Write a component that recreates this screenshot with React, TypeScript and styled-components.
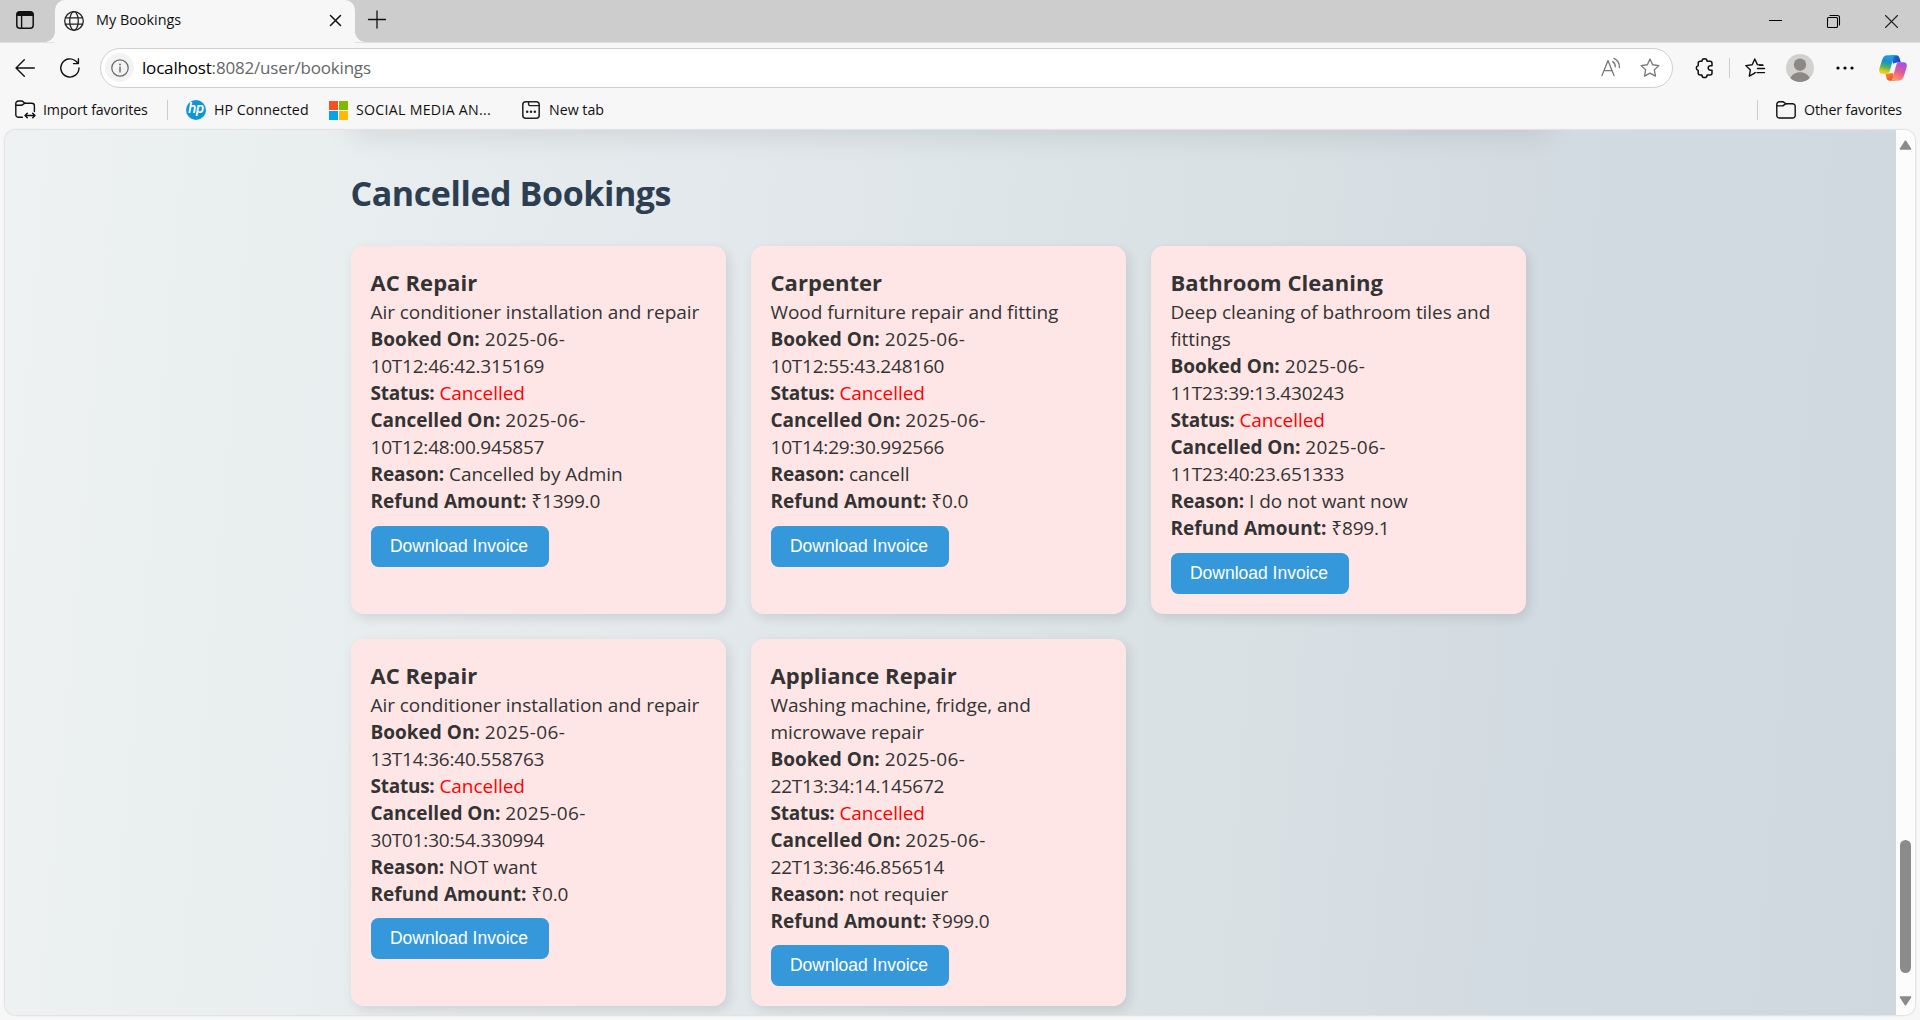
import React from "react";
import styled, { createGlobalStyle } from "styled-components";

const GlobalStyle = createGlobalStyle`
  * { box-sizing: border-box; }
  body {
    margin: 0;
    overflow: hidden;
    background: #f7f7f7;
    font-family: "Open Sans", "Noto Sans", sans-serif;
  }
  svg { display: block; flex: none; overflow: visible; }
`;

const Window = styled.div`
  width: 1920px;
  height: 1020px;
  display: flex;
  flex-direction: column;
  overflow: hidden;
  background: #f7f7f7;
`;

/* ---------- browser chrome ---------- */

const TabStrip = styled.div`
  height: 43px;
  flex: none;
  display: flex;
  background: #cdcdcd;
  border-bottom: 1px solid #e2e2e2;
`;

const TabActions = styled.div`
  width: 55px;
  padding: 11px 0 0 16px;
`;

const Tab = styled.div`
  position: relative;
  width: 300px;
  height: 43px;
  padding: 0 14px 2px 9px;
  display: flex;
  align-items: center;
  background: #f7f7f7;
  border-radius: 10px 10px 0 0;

  &::before,
  &::after {
    content: "";
    position: absolute;
    bottom: 1px;
    width: 10px;
    height: 10px;
  }
  &::before {
    left: -10px;
    background: radial-gradient(circle at 0 0, transparent 9.5px, #f7f7f7 10px);
  }
  &::after {
    right: -10px;
    background: radial-gradient(circle at 100% 0, transparent 9.5px, #f7f7f7 10px);
  }
`;

const TabTitle = styled.span`
  flex: 1;
  margin-left: 12px;
  padding-bottom: 1px;
  font-size: 14.4px;
  line-height: 20px;
  color: #111;
`;

const NewTab = styled.div`
  padding: 10px 0 0 13px;
`;

const WindowButtons = styled.div`
  margin-left: auto;
  padding: 15px 22px 0 0;
  display: flex;
  gap: 45px;
`;

const Toolbar = styled.div`
  height: 49px;
  flex: none;
  padding: 0 13px 0 15px;
  display: flex;
  align-items: center;
`;

const AddressBar = styled.div`
  width: 1573px;
  height: 40px;
  margin-left: 20px;
  padding: 0 12px 0 4px;
  display: flex;
  align-items: center;
  background: #fff;
  border: 1px solid #cfcfcf;
  border-radius: 20px;
`;

const InfoBadge = styled.div`
  width: 29px;
  height: 29px;
  display: grid;
  place-items: center;
  border-radius: 50%;
  background: #f3f3f3;
`;

const Url = styled.span`
  flex: 1;
  margin-left: 8px;
  font-size: 17px;
  letter-spacing: -0.18px;
  line-height: 24px;
  color: #666;
`;

const Host = styled.span`
  color: #000;
`;

const Divider = styled.span<{ $left: number; $right: number }>`
  width: 1px;
  height: 20px;
  margin-left: ${(p) => p.$left}px;
  margin-right: ${(p) => p.$right}px;
  background: #cdcdcd;
`;

const Slot = styled.span<{ $left: number }>`
  flex: none;
  margin-left: ${(p) => p.$left}px;
`;

const FavoritesBar = styled.div`
  height: 38px;
  flex: none;
  padding: 0 18px 2px 15px;
  display: flex;
  align-items: center;
`;

const Favorite = styled.div<{ $width?: number; $gap?: number }>`
  width: ${(p) => (p.$width ? `${p.$width}px` : "auto")};
  display: flex;
  align-items: center;
  gap: ${(p) => p.$gap ?? 8}px;
  white-space: nowrap;
`;

const FavoriteLabel = styled.span<{ $track?: number }>`
  font-size: 14.2px;
  letter-spacing: ${(p) => p.$track ?? 0}px;
  line-height: 20px;
  color: #111;
`;

const Spacer = styled.span`
  flex: 1;
`;

/* ---------- page ---------- */

const Viewport = styled.div`
  height: 885px;
  margin: 0 5px 5px;
  flex: none;
  display: flex;
  border-radius: 10px;
  overflow: hidden;
  box-shadow: 0 0 2px rgba(0, 0, 0, 0.3);
`;

const Page = styled.main`
  flex: 1;
  padding-left: 345.5px;
  display: flex;
  flex-direction: column;
  overflow: hidden;
  background: linear-gradient(95deg, #eef2f2 0%, #e3e9ec 36%, #d9e1e4 63%, #d3dbe2 80%, #cfd8df 100%);
`;

const PreviousSection = styled.div`
  flex: none;
  width: 1200px;
  height: 100px;
  margin-top: -105px;
  border-radius: 12px;
  box-shadow: 0 10px 30px rgba(0, 0, 0, 0.1);
`;

const Heading = styled.h2`
  margin: 45px 0 30px;
  font-size: 34px;
  font-weight: 700;
  letter-spacing: -0.42px;
  line-height: 46px;
  color: #2c3e50;
`;

const Grid = styled.div`
  display: grid;
  grid-template-columns: repeat(3, 375px);
  gap: 25px;
`;

const Card = styled.article`
  padding: 20px;
  border-radius: 12.5px;
  background: #ffe6e6;
  box-shadow: 3px 4px 12px rgba(0, 0, 0, 0.11);
  color: #333;
`;

const CardTitle = styled.h3`
  margin: 0 0 1px;
  font-size: 22px;
  font-weight: 700;
  letter-spacing: 0.04px;
  line-height: 32px;
`;

const Text = styled.p`
  margin: 0;
  font-size: 19px;
  letter-spacing: -0.05px;
  line-height: 27px;
`;

const Label = styled.strong<{ $track?: number }>`
  font-weight: 700;
  letter-spacing: ${(p) => p.$track ?? 0}px;
`;

const Status = styled.span`
  color: #f00;
`;

const Day = styled.span`
  letter-spacing: 0.38px;
`;

const Time = styled.span`
  letter-spacing: -0.21px;
`;

const InvoiceButton = styled.button`
  display: block;
  width: 178px;
  height: 41px;
  margin-top: 10.5px;
  padding: 0 1px 1px 0;
  border: 0;
  border-radius: 7.5px;
  background: #3498db;
  color: #fff;
  font: 17.5px/20px "Liberation Sans", Arial, sans-serif;
  white-space: nowrap;
`;

const ScrollTrack = styled.div`
  width: 19px;
  padding: 10px 0 9px;
  display: flex;
  flex-direction: column;
  align-items: center;
  background: #fcfcfc;
`;

const ScrollThumb = styled.div`
  width: 11px;
  height: 133px;
  margin: auto 0 23px;
  border-radius: 6px;
  background: #8b8b8b;
`;

/* ---------- icons ---------- */

const line = (color = "#111", width = 1.4) => ({
  fill: "none",
  stroke: color,
  strokeWidth: width,
  strokeLinecap: "round" as const,
  strokeLinejoin: "round" as const,
});

const TabActionsIcon = () => (
  <svg width="18" height="18" viewBox="0 0 18 18">
    <rect x="0.8" y="0.8" width="16.4" height="16.4" rx="3" {...line("#111", 1.5)} />
    <path d="M0.8 5V3.8a3 3 0 0 1 3-3h10.4a3 3 0 0 1 3 3V5z" fill="#111" />
    <path d="M5.6 5v12" {...line("#111", 1.4)} />
  </svg>
);

const GlobeIcon = () => (
  <svg width="20" height="20" viewBox="0 0 20 20" {...line("#222", 1.3)}>
    <circle cx="10" cy="10" r="9.3" />
    <ellipse cx="10" cy="10" rx="4.3" ry="9.3" />
    <path d="M1.5 6.8h17M1.5 13.2h17" />
  </svg>
);

const CloseIcon = ({ size, width, color }: { size: number; width: number; color: string }) => (
  <svg width={size} height={size} viewBox={`0 0 ${size} ${size}`}>
    <path d={`M0.5 0.5L${size - 0.5} ${size - 0.5}M${size - 0.5} 0.5L0.5 ${size - 0.5}`} {...line(color, width)} />
  </svg>
);

const PlusIcon = () => (
  <svg width="18" height="18" viewBox="0 0 18 18">
    <path d="M9 1v17M0.5 9.5h17" {...line("#111", 1.3)} />
  </svg>
);

const MinimizeIcon = () => (
  <svg width="13" height="13" viewBox="0 0 13 13">
    <path d="M0 5.5h13" stroke="#000" />
  </svg>
);

const RestoreIcon = () => (
  <svg width="13" height="13" viewBox="0 0 13 13">
    <rect x="0.5" y="2.5" width="10" height="10" rx="1" {...line("#000", 1.1)} />
    <path d="M3 0.5h7.5a2 2 0 0 1 2 2V10" {...line("#000", 1.1)} />
  </svg>
);

const BackIcon = () => (
  <svg width="20" height="20" viewBox="0 0 20 20">
    <path d="M19.3 10H1M9.3 1.8L1 10l8.3 8.2" {...line("#111", 1.4)} />
  </svg>
);

const ReloadIcon = () => (
  <svg width="20" height="20" viewBox="0 0 20 20">
    <path d="M19 10a9.1 9.1 0 1 1-3-6.8l2.2 2.2M18.4 0.8v4.8h-4.9" {...line("#111", 1.4)} />
  </svg>
);

const InfoIcon = () => (
  <svg width="18" height="18" viewBox="0 0 18 18">
    <circle cx="9" cy="9" r="8.2" {...line("#666", 1.2)} />
    <path d="M9 8v5" {...line("#666", 1.4)} />
    <circle cx="9" cy="5.4" r="0.95" fill="#666" />
  </svg>
);

const ReadAloudIcon = () => (
  <svg width="20" height="20" viewBox="0 0 20 20" {...line("#777", 1.3)}>
    <path d="M1 17.6L7 2.5l6 15.1M3.2 12.6h7.7" />
    <path d="M11.7 3.6a6 6 0 0 1 2.6 5.2M13 0.4a9.8 9.8 0 0 1 5.4 9.2" />
  </svg>
);

const StarIcon = () => (
  <svg width="20" height="20" viewBox="0 0 20 20">
    <path
      d="M10 1l2.65 5.75 6.25.8-4.6 4.35 1.2 6.25L10 15.1l-5.5 3.05 1.2-6.25L1.1 7.55l6.25-.8z"
      {...line("#777", 1.3)}
    />
  </svg>
);

const PuzzleIcon = () => (
  <svg width="19" height="20" viewBox="0 0 19 20">
    <path
      d="M7.9 3.3a2.6 2.6 0 0 1 5.2 0H16a2 2 0 0 1 2 2v2.5h-1.600a2.200 2.200 0 0 0 0 4.400H18v2.800a2 2 0 0 1-2 2h-2.900a2.600 2.600 0 0 1-5.200 0H6.200a2 2 0 0 1-2-2v-2.600a2.400 2.400 0 0 1 0-4.700V5.300a2 2 0 0 1 2-2z"
      {...line("#111", 1.5)}
    />
  </svg>
);

const FavoritesIcon = () => (
  <svg width="20" height="20" viewBox="0 0 20 20" {...line("#111", 1.4)}>
    <path d="M17.8 7.3l-5.4-.7L9.8 1 7.2 6.7l-6.4.9 4.6 4.3-1.1 6.3 5-2.8" />
    <path d="M12.5 10.5h7M12 14.6h7.5M14.5 7.3h3.3M9.6 14.9l.7-.3" />
  </svg>
);

const Avatar = () => (
  <svg width="28" height="28" viewBox="0 0 28 28">
    <clipPath id="avatar-clip">
      <circle cx="14" cy="14" r="14" />
    </clipPath>
    <circle cx="14" cy="14" r="14" fill="#d3d1ce" />
    <g clipPath="url(#avatar-clip)" fill="#8c8886">
      <circle cx="14" cy="10.7" r="6.2" />
      <path d="M3.8 25.5c1.6-5 5.6-7.3 10.2-7.3s8.6 2.3 10.2 7.3L14 29z" />
    </g>
  </svg>
);

const MoreIcon = () => (
  <svg width="18" height="4" viewBox="0 0 18 4" fill="#000">
    <circle cx="2" cy="2" r="1.6" />
    <circle cx="9" cy="2" r="1.6" />
    <circle cx="16" cy="2" r="1.6" />
  </svg>
);

const CopilotIcon = () => (
  <svg width="28" height="26" viewBox="0 0 28 26">
    <defs>
      <linearGradient id="cp-left" x1="0.5" y1="0" x2="0.3" y2="1">
        <stop offset="0" stopColor="#1f9bea" />
        <stop offset="0.35" stopColor="#1a8fd0" />
        <stop offset="0.62" stopColor="#4db35a" />
        <stop offset="0.9" stopColor="#f2cb14" />
      </linearGradient>
      <linearGradient id="cp-right" x1="0.7" y1="0" x2="0.3" y2="1">
        <stop offset="0" stopColor="#9a52ee" />
        <stop offset="0.45" stopColor="#e0559f" />
        <stop offset="1" stopColor="#fb9a62" />
      </linearGradient>
      <linearGradient id="cp-top" x1="0" y1="0" x2="1" y2="0.4">
        <stop offset="0" stopColor="#1785dd" />
        <stop offset="1" stopColor="#1a3fc4" />
      </linearGradient>
      <linearGradient id="cp-bottom" x1="0" y1="0" x2="0.6" y2="1">
        <stop offset="0" stopColor="#f6a21c" />
        <stop offset="1" stopColor="#ef4d3a" />
      </linearGradient>
    </defs>
    <path d="M12 .2h5.3c1.9 0 2.7 1.2 3.200 2.800L21.800 7.600h-3.500c-2 0-3.200 1-3.800 2.800z" fill="url(#cp-top)" />
    <path d="M16 25.800h-5.300c-1.900 0-2.700-1.200-3.200-2.800L6.400 18.500h3.300c2 0 3.200-1 3.800-2.800z" fill="url(#cp-bottom)" />
    <path
      d="M15.800.2H8.700C5.500.2 4 2.100 3.100 4.900L.7 12.500c-1 3.300-.8 6.200 3 6.200h3.700c2 0 2.800-1.200 3.400-3l3.400-11.600C14.700 2.300 15.100.8 15.800.2z"
      fill="url(#cp-left)"
    />
    <path
      d="M12.200 25.800h7.100c3.200 0 4.700-1.900 5.600-4.700l2.400-7.600c1-3.300.8-6.200-3-6.200h-3.700c-2 0-2.800 1.200-3.400 3l-3.400 11.600c-.5 1.800-.9 3.300-1.600 3.900z"
      fill="url(#cp-right)"
    />
    <path d="M14.600 8.200h2.600c-.3.500-.6 1.200-.9 2.100l-2.300 7.900h-2.500c.2-.5.500-1.200.7-1.900z" fill="#f7f7f7" />
  </svg>
);

const ImportFolderIcon = () => (
  <svg width="21" height="20" viewBox="0 0 21 20" {...line("#111", 1.4)}>
    <path d="M7.4 17.3H3.400a2.600 2.600 0 0 1-2.600-2.600V3.600A2.600 2.600 0 0 1 3.400 1h3.200c1.700 0 2 2.200 4 2.200h6.200a2.600 2.600 0 0 1 2.600 2.600v5.700" />
    <path d="M.9 5.300h5.200c1.900 0 2.100-1.700 3.900-2.100" />
    <path d="M10.200 15.500h9.600M12.300 13.200L10 15.500l2.300 2.300M17.700 13.200l2.300 2.300-2.300 2.300" />
  </svg>
);

const FolderIcon = () => (
  <svg width="20" height="18" viewBox="0 0 20 18" {...line("#111", 1.4)}>
    <path d="M3.400.8h3.300c1.700 0 2 2 4 2h5.900a2.600 2.600 0 0 1 2.600 2.600v9a2.600 2.600 0 0 1-2.600 2.600H3.400A2.600 2.600 0 0 1 .8 14.400v-11A2.600 2.600 0 0 1 3.400.8z" />
    <path d="M.9 4.900h5.100c1.900 0 2.200-1.700 4-2.100" />
  </svg>
);

const HpMark = styled.span`
  width: 20px;
  height: 20px;
  flex: none;
  border-radius: 50%;
  background: #0f96d8;
  color: #fff;
  font: italic 500 15px/17px Roboto, sans-serif;
  letter-spacing: -0.5px;
  text-align: center;
`;

const MicrosoftIcon = () => (
  <svg width="19" height="19" viewBox="0 0 19 19">
    <path d="M0 0h9v9H0z" fill="#f65022" />
    <path d="M10 0h9v9h-9z" fill="#7fba00" />
    <path d="M0 10h9v9H0z" fill="#00a4ef" />
    <path d="M10 10h9v9h-9z" fill="#ffb900" />
  </svg>
);

const NewTabPageIcon = () => (
  <svg width="18" height="18" viewBox="0 0 18 18">
    <rect x="0.8" y="0.8" width="16.4" height="16.4" rx="3" {...line("#222", 1.5)} />
    <path d="M6.600 1v2.200a1.400 1.400 0 0 0 1.400 1.400h9" {...line("#222", 1.4)} />
    <g fill="#222">
      <circle cx="5.2" cy="10.7" r="1.25" />
      <circle cx="9" cy="10.7" r="1.25" />
      <circle cx="12.8" cy="10.7" r="1.25" />
    </g>
  </svg>
);

const ScrollArrow = ({ down }: { down?: boolean }) => (
  <svg width="13" height="10" viewBox="0 0 13 10">
    <path
      d={down ? "M1.5 1h10L6.5 8.700z" : "M1.5 9h10L6.5 1.300z"}
      fill="#8b8b8b"
      stroke="#8b8b8b"
      strokeWidth="1.6"
      strokeLinejoin="round"
    />
  </svg>
);

/* ---------- data ---------- */

type Stamp = [day: string, time: string];

interface Booking {
  service: string;
  description: string;
  booked: Stamp;
  cancelled: Stamp;
  reason: string;
  refund: string;
}

const bookings: Booking[] = [
  {
    service: "AC Repair",
    description: "Air conditioner installation and repair",
    booked: ["2025-06-", "10T12:46:42.315169"],
    cancelled: ["2025-06-", "10T12:48:00.945857"],
    reason: "Cancelled by Admin",
    refund: "₹1399.0",
  },
  {
    service: "Carpenter",
    description: "Wood furniture repair and fitting",
    booked: ["2025-06-", "10T12:55:43.248160"],
    cancelled: ["2025-06-", "10T14:29:30.992566"],
    reason: "cancell",
    refund: "₹0.0",
  },
  {
    service: "Bathroom Cleaning",
    description: "Deep cleaning of bathroom tiles and fittings",
    booked: ["2025-06-", "11T23:39:13.430243"],
    cancelled: ["2025-06-", "11T23:40:23.651333"],
    reason: "I do not want now",
    refund: "₹899.1",
  },
  {
    service: "AC Repair",
    description: "Air conditioner installation and repair",
    booked: ["2025-06-", "13T14:36:40.558763"],
    cancelled: ["2025-06-", "30T01:30:54.330994"],
    reason: "NOT want",
    refund: "₹0.0",
  },
  {
    service: "Appliance Repair",
    description: "Washing machine, fridge, and microwave repair",
    booked: ["2025-06-", "22T13:34:14.145672"],
    cancelled: ["2025-06-", "22T13:36:46.856514"],
    reason: "not requier",
    refund: "₹999.0",
  },
];

const DateLine = ({ label, value: [day, time] }: { label: string; value: Stamp }) => (
  <Text>
    <Label>{label}</Label> <Day>{day}</Day>
    <wbr />
    <Time>{time}</Time>
  </Text>
);

const BookingCard = ({ booking }: { booking: Booking }) => (
  <Card>
    <CardTitle>{booking.service}</CardTitle>
    <Text>{booking.description}</Text>
    <DateLine label="Booked On:" value={booking.booked} />
    <Text>
      <Label $track={-0.25}>Status:</Label> <Status>Cancelled</Status>
    </Text>
    <DateLine label="Cancelled On:" value={booking.cancelled} />
    <Text>
      <Label $track={-0.1}>Reason:</Label> {booking.reason}
    </Text>
    <Text>
      <Label $track={0.05}>Refund Amount:</Label> <Time>{booking.refund}</Time>
    </Text>
    <InvoiceButton>Download Invoice</InvoiceButton>
  </Card>
);

export default function App() {
  return (
    <Window>
      <GlobalStyle />
      <TabStrip>
        <TabActions>
          <TabActionsIcon />
        </TabActions>
        <Tab>
          <GlobeIcon />
          <TabTitle>My Bookings</TabTitle>
          <CloseIcon size={11} width={1.5} color="#111" />
        </Tab>
        <NewTab>
          <PlusIcon />
        </NewTab>
        <WindowButtons>
          <MinimizeIcon />
          <RestoreIcon />
          <CloseIcon size={13} width={1.1} color="#222" />
        </WindowButtons>
      </TabStrip>

      <Toolbar>
        <BackIcon />
        <Slot $left={25}>
          <ReloadIcon />
        </Slot>
        <AddressBar>
          <InfoBadge>
            <InfoIcon />
          </InfoBadge>
          <Url>
            <Host>localhost</Host>:8082/user/bookings
          </Url>
          <ReadAloudIcon />
          <Slot $left={19}>
            <StarIcon />
          </Slot>
        </AddressBar>
        <Slot $left={21}>
          <PuzzleIcon />
        </Slot>
        <Divider $left={16} $right={15} />
        <FavoritesIcon />
        <Slot $left={21}>
          <Avatar />
        </Slot>
        <Slot $left={22}>
          <MoreIcon />
        </Slot>
        <Slot $left={25}>
          <CopilotIcon />
        </Slot>
      </Toolbar>

      <FavoritesBar>
        <Favorite $width={133} $gap={7}>
          <ImportFolderIcon />
          <FavoriteLabel $track={-0.1}>Import favorites</FavoriteLabel>
        </Favorite>
        <Divider $left={19} $right={18} />
        <Favorite $width={143}>
          <HpMark>hp</HpMark>
          <FavoriteLabel $track={0.05}>HP Connected</FavoriteLabel>
        </Favorite>
        <Favorite $width={193}>
          <MicrosoftIcon />
          <FavoriteLabel $track={0.27}>SOCIAL MEDIA AN...</FavoriteLabel>
        </Favorite>
        <Favorite $gap={9}>
          <NewTabPageIcon />
          <FavoriteLabel>New tab</FavoriteLabel>
        </Favorite>
        <Spacer />
        <Divider $left={0} $right={18} />
        <Favorite>
          <FolderIcon />
          <FavoriteLabel $track={-0.11}>Other favorites</FavoriteLabel>
        </Favorite>
      </FavoritesBar>

      <Viewport>
        <Page>
          <PreviousSection />
          <Heading>Cancelled Bookings</Heading>
          <Grid>
            {bookings.map((booking) => (
              <BookingCard key={booking.booked[1]} booking={booking} />
            ))}
          </Grid>
        </Page>
        <ScrollTrack>
          <ScrollArrow />
          <ScrollThumb />
          <ScrollArrow down />
        </ScrollTrack>
      </Viewport>
    </Window>
  );
}
